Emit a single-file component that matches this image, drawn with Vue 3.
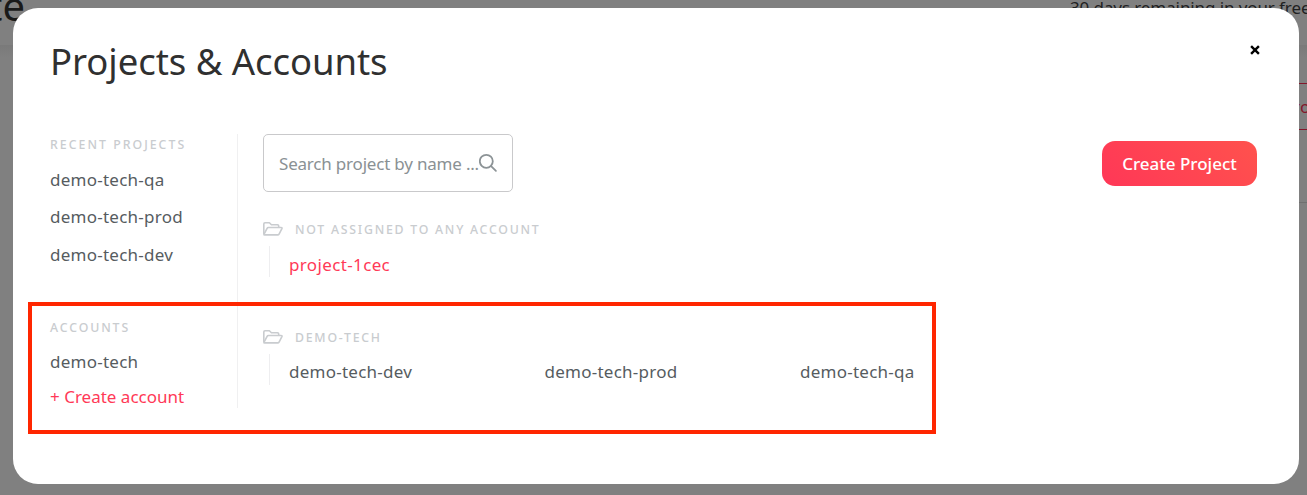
<script setup>
const recentProjects = ['demo-tech-qa', 'demo-tech-prod', 'demo-tech-dev']
const groups = [
  { name: 'NOT ASSIGNED TO ANY ACCOUNT', projects: ['project-1cec'], active: true },
  { name: 'DEMO-TECH', projects: ['demo-tech-dev', 'demo-tech-prod', 'demo-tech-qa'], active: false },
]
</script>

<template>
  <div class="page">
    <div class="backdrop">
      <div class="topbar"></div>
      <span class="page-title">te</span>
      <span class="trial">30 days remaining in your free</span>
      <div class="ghost-button">ro</div>
      <div class="ghost-line"></div>
    </div>

    <section class="modal">
      <header class="modal-header">
        <h1>Projects &amp; Accounts</h1>
        <button class="close" aria-label="Close">
          <svg width="10" height="10" viewBox="0 0 10 10"><path d="M1.1 1.1L8.9 8.9M8.9 1.1L1.1 8.9" stroke="#000" stroke-width="2.4" /></svg>
        </button>
      </header>

      <div class="body">
        <aside class="sidebar">
          <div class="label">RECENT PROJECTS</div>
          <nav class="recent">
            <a v-for="name in recentProjects" :key="name">{{ name }}</a>
          </nav>
          <div class="label accounts-label">ACCOUNTS</div>
          <nav class="accounts">
            <a>demo-tech</a>
            <a class="create">+ Create account</a>
          </nav>
        </aside>

        <main class="content">
          <div class="toolbar">
            <div class="search">
              <span class="placeholder">Search project by name ...</span>
              <svg width="20" height="20" viewBox="0 0 20 20" fill="none" stroke="#8c9396" stroke-width="1.8" stroke-linecap="round">
                <circle cx="7.3" cy="8.3" r="6.5" />
                <path d="M12.1 13.1L16.9 17.8" />
              </svg>
            </div>
            <button class="primary">Create Project</button>
          </div>

          <div v-for="group in groups" :key="group.name" class="group">
            <div class="group-head">
              <svg width="20" height="14" viewBox="0 0 20 14" fill="none" stroke="#c9cccf" stroke-width="1.6" stroke-linejoin="round">
                <path d="M.8 12.2V2Q.8 .8 2 .8H6.4L8.4 2.8H14.5Q15.7 2.8 15.7 4V5.7" />
                <path d="M.9 12.4L4.1 6.3Q4.5 5.5 5.4 5.5H18Q19.4 5.5 18.9 6.6L16.2 11.8Q15.7 12.9 14.6 12.9H1.6Q.8 12.9 .8 12.2" />
              </svg>
              <span class="label">{{ group.name }}</span>
            </div>
            <div class="projects" :class="{ active: group.active }">
              <a v-for="name in group.projects" :key="name">{{ name }}</a>
            </div>
          </div>
        </main>
      </div>
    </section>
    <div class="highlight"></div>
  </div>
</template>

<style>
body { overflow: hidden; }
</style>

<style scoped>
* { box-sizing: border-box; }
.page {
  position: relative;
  width: 1307px;
  height: 495px;
  padding: 8px 8px 11px 13px;
  overflow: hidden;
  background: #808080;
  font-family: "Noto Sans", "Open Sans", sans-serif;
  font-size: 17px;
  font-weight: 400;
  letter-spacing: 0.25px;
  color: #565c5f;
}
.backdrop { position: absolute; inset: 0; overflow: hidden; white-space: nowrap; }
.topbar { height: 58px; background: linear-gradient(#808080 45px, #7a7a7a 45px, #808080 58px); }
.page-title {
  position: absolute; right: 1282px; top: -19px;
  font-size: 40px; line-height: 50px; font-weight: 400; letter-spacing: 0; color: #1a1a1a;
}
.trial { position: absolute; left: 1070px; top: -4px; line-height: 24px; letter-spacing: -0.1px; color: #202122; }
.ghost-button {
  position: absolute; left: 1150px; top: 83px; width: 200px; height: 47px;
  padding-left: 142px; border: 1px solid #83172b; color: #83172b; line-height: 46px;
}
.ghost-line { position: absolute; left: 1200px; right: 0; top: 202px; height: 1px; background: #707070; }
.modal {
  position: relative;
  height: 476px;
  padding: 32px 42px 0 38px;
  border-radius: 25px;
  background: #fff;
}
.modal-header { display: flex; justify-content: space-between; height: 94px; }
h1 { margin: 0 0 0 -1px; font-size: 36.5px; line-height: 42px; font-weight: 400; letter-spacing: -0.06px; color: #303030; }
button { border: 0; font: inherit; }
.close { display: flex; height: 10px; margin: 5px -3px 0 0; padding: 0; background: none; }
.body { display: flex; height: 274px; }
.sidebar { width: 188px; margin-left: -1px; padding-top: 1px; border-right: 1px solid #f0f0f1; }
.label { font-size: 12.3px; line-height: 20px; font-weight: 500; letter-spacing: 2.03px; color: #c9cccf; white-space: nowrap; }
.content .label { letter-spacing: 1.76px; }
.recent { display: grid; grid-auto-rows: 37.5px; padding-top: 5.4px; }
.recent a, .accounts a { display: flex; align-items: center; }
.accounts-label { margin-top: 45px; letter-spacing: 1.9px; }
.accounts { display: grid; grid-auto-rows: 35px; padding-top: 6.5px; }
.create { color: #ff3957; letter-spacing: 0; }
.content { flex: 1; padding-left: 25px; }
.toolbar { display: flex; justify-content: space-between; align-items: center; height: 58px; }
.search {
  display: flex; align-items: center; width: 250px; height: 58px; padding-left: 15px;
  border: 1px solid #c9c9cb; border-radius: 5px; color: #8a9194; letter-spacing: -0.2px;
}
.placeholder { width: 200px; white-space: nowrap; }
.search svg { flex: none; }
.primary {
  width: 155px; height: 45px; padding: 0; border-radius: 13px; color: #fff;
  font-weight: 500; letter-spacing: 0;
  background: linear-gradient(45deg, #ff3757, #ff524d);
}
.group { height: 108px; padding-top: 28px; }
.group-head { display: flex; align-items: center; gap: 12px; height: 20px; }
.group-head svg { margin-top: -2px; }
.projects {
  display: grid; grid-template-columns: repeat(3, 255.5px); align-items: center;
  height: 31px; margin: 6px 0 0 6px; padding: 5px 0 0 19px; border-left: 1px solid #eeeef0;
}
.projects a { line-height: 24px; }
.active { padding-top: 6px; color: #ff3957; letter-spacing: 0.36px; }
.highlight { position: absolute; left: 28px; top: 302px; width: 908px; height: 132px; border: 4px solid #ff2600; }
</style>
